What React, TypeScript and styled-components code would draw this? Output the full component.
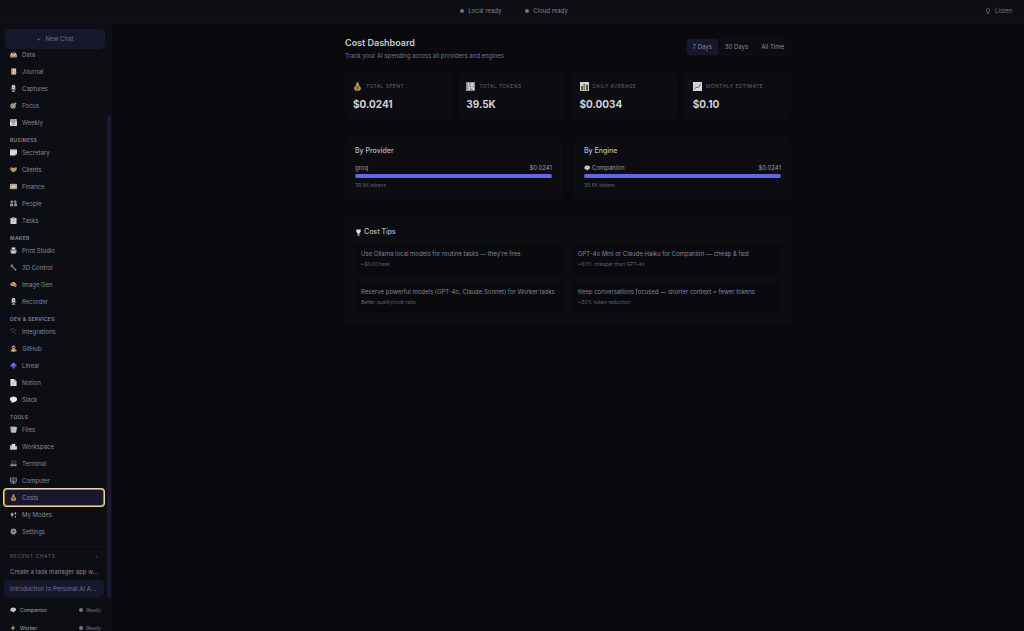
import React from 'react';
import styled, { createGlobalStyle } from 'styled-components';

const GlobalStyle = createGlobalStyle`
  *, *::before, *::after { box-sizing: border-box; }
  body {
    margin: 0;
    background: #09090e;
    color: #9597a5;
    font-family: Inter, "Liberation Sans", sans-serif;
    font-size: 6px;
    line-height: 8px;
  }
  h1, h2, p, ul { margin: 0; padding: 0; }
  ul { list-style: none; }
  button { font: inherit; border: 0; cursor: pointer; }
  a { color: inherit; text-decoration: none; }
`;

/* ---------- icons ---------- */

const glyphs: Record<string, React.ReactNode> = {
  data: (<><path d="M1 8 3 4h10l2 4v6H1z" fill="#d8d0c4" /><path d="M1 9h4l1 2h4l1-2h4v5H1z" fill="#b98a55" /><path d="M4 5h8v3H4z" fill="#70737c" /></>),
  journal: (<><rect x="3" y="1" width="11" height="14" rx="1" fill="#d9d3c8" /><path d="M3 1h3v14H3z" fill="#ad7a45" /><path d="M8 5h4M8 8h4" stroke="#8a7a66" /><path d="m8 14 6-6 1 2-5 5z" fill="#c48a48" /></>),
  mic: (<><rect x="4" y="0" width="8" height="10" rx="3" fill="#d3d4d8" /><path d="M6 3h5M6 6h5" stroke="#5a5c64" /><path d="M3 8c0 6 10 6 10 0M8 12v3M4 15h8" stroke="#989aa2" fill="none" strokeWidth="2" /></>),
  focus: (<><circle cx="7" cy="9" r="6" fill="#c9b9a5" /><circle cx="7" cy="9" r="4" fill="#6d4a3a" /><circle cx="7" cy="9" r="2" fill="#e0d2c0" /><path d="m8 8 6-6M12 1v3h3" stroke="#c8c8cc" fill="none" strokeWidth="1.5" /></>),
  calendar: (<><rect x="0" y="1" width="16" height="15" rx="1" fill="#d9d7d4" /><path d="M0 1h16v5H0z" fill="#9a8f8c" /><path d="M4 0v4M12 0v4" stroke="#e4e4e6" strokeWidth="1.5" /><path d="M4 8h2M7 8h2M10 8h2M4 12h2M7 12h2M10 12h2" stroke="#60626a" strokeWidth="2" /></>),
  note: (<><path d="M0 1h16v10l-4 4H0z" fill="#dcdad8" /><path d="M0 1h16v2H0z" fill="#8f9098" /><path d="M16 11h-4v4z" fill="#777983" /></>),
  handshake: (<><path d="m0 4 4-1 4 2 4-2 4 1-1 5-6 5-4-1-4-4z" fill="#b98c58" /><path d="m5 7 3-2 4 4M5 10l3 3" stroke="#e0b987" fill="none" strokeWidth="1.5" /></>),
  finance: (<><rect x="0" y="2" width="16" height="12" fill="#b1b2b1" /><rect x="5" y="2" width="5" height="12" fill="#c79a5b" /><circle cx="8" cy="8" r="3" fill="#e2d2b5" /><path d="M1 5h3M12 12h3" stroke="#53565c" /></>),
  people: (<g fill="#8d929e"><circle cx="4" cy="4" r="3" /><circle cx="12" cy="4" r="3" /><path d="M0 14V9q4-3 7 0v5zM9 14V9q4-3 7 0v5z" /></g>),
  tasks: (<><rect x="1" y="2" width="14" height="14" rx="1" fill="#d3d1cf" /><rect x="5" y="0" width="6" height="4" rx="1" fill="#8c8e98" /><path d="M5 7h6M5 10h6" stroke="#8b8c92" /></>),
  printer: (<><path d="M4 1h8v5H4z" fill="#e0e0e2" /><path d="M1 6h14v7H1z" fill="#9698a0" /><path d="M3 10h10v5H3z" fill="#d3d3d6" /></>),
  wrench: (<path d="M1 1q4-1 6 2 1 2 0 3l8 7-2 3-8-9q-3 1-5-2l3 0 1-2z" fill="#8b8e99" />),
  palette: (<><path d="M1 6q3-5 9-3 6 3 5 9-3 3-5 1-2-3-5-1-6-1-4-6z" fill="#c39557" /><circle cx="5" cy="6" r="1.3" fill="#5c4bd0" /><circle cx="9" cy="5" r="1.3" fill="#f0dfc2" /><circle cx="12" cy="9" r="1.3" fill="#a34436" /></>),
  plug: (<path d="m1 3 3-2M2 5l5-4 4 5-4 4zM9 9l5 5M12 3l2 3" stroke="#4d505b" strokeWidth="1.6" fill="none" />),
  github: (<><path d="M1 15q0-6 5-7h5q5 2 4 7z" fill="#bb8550" /><circle cx="8" cy="5" r="4" fill="#c8c6c3" /><path d="M5 4h6v3H5z" fill="#3d3b3c" /><path d="M6 11h4v4H6z" fill="#d9d6d1" /></>),
  linear: (<><path d="m8 0 8 8-8 8-8-8z" fill="#4c4fca" /><path d="m8 2 5 5-5 2-5-2z" fill="#7375ec" /></>),
  page: (<><path d="M1 0h9l5 5v11H1z" fill="#dedddb" /><path d="M10 0v5h5z" fill="#83858d" /><path d="M5 8h6M5 11h6" stroke="#a8a8aa" /></>),
  bubble: (<path d="M8 1c11 0 11 13 0 13l-5 2 1-3C-3 10-1 1 8 1z" fill="#e5e4e2" />),
  files: (<><path d="M0 1h11l4 2-2 12H2z" fill="#8c8e94" /><path d="M4 3h12l-2 12H3z" fill="#c9c8c6" /><path d="M6 7h6M6 10h5" stroke="#84858c" /></>),
  workspace: (<><path d="M0 5h6l2 2h8v8H0z" fill="#c8a677" /><path d="M4 2h8v9H4z" fill="#d9d8d5" /><path d="M1 9h14v6H1z" fill="#d5cbbb" /></>),
  terminal: (<><path d="M3 2h11v7H3z" fill="#24272d" stroke="#565b63" /><path d="M1 10h14v4H1z" fill="#a5a7ab" /><path d="M3 12h10" stroke="#575a62" /></>),
  computer: (<><rect x="1" y="2" width="14" height="9" fill="#30343c" stroke="#8c9099" strokeWidth="1.5" /><path d="M4 5h7M4 8h5" stroke="#747985" /><path d="M7 11h2v3H7zM2 14h12" stroke="#a4a6ab" strokeWidth="1.5" /></>),
  bag: (<><path d="M5 1h6L9 5q6 3 5 8-1 3-6 3t-6-3q-1-5 5-8z" fill="#b88b4e" /><path d="M5 5h6" stroke="#e5c48c" strokeWidth="1.5" /><path d="M10 8q-4-1-4 1 4 0 4 2-1 2-4 1M8 7v7" stroke="#5c3f22" fill="none" /></>),
  sparkle: (<g fill="#cdb98f"><path d="m5 2 1 4 3 2-3 2-1 5-2-5-2-2 2-2z" /><path d="m12 1 1 3 2 1-2 1-1 3-1-3-2-1 2-1zM12 10l2 3-2 3-1-3z" /></g>),
  gear: (<><circle cx="8" cy="8" r="5.5" fill="#8e9199" stroke="#a5a7ad" strokeWidth="3" strokeDasharray="3 1.3" /><circle cx="8" cy="8" r="2.4" fill="#383b43" /></>),
  numbers: (<><rect x="0" y="0" width="16" height="16" rx="1" fill="#8d9299" /><path d="M3 3h2v4M9 3h4v2H9v2h4M3 9h3v4H3M10 9v2h3M13 9v5" stroke="#eef0f2" fill="none" strokeWidth="1.6" /></>),
  bars: (<><rect x="0" y="0" width="16" height="16" fill="#d5d4d1" /><path d="M2 7h3v8H2z" fill="#4c4f55" /><path d="M6 3h3v12H6z" fill="#94723f" /><path d="M11 5h3v10h-3z" fill="#353943" /></>),
  trend: (<><rect x="0" y="0" width="16" height="16" fill="#d9d9da" /><path d="m2 13 4-4 3 1 5-7" stroke="#54565e" fill="none" strokeWidth="1.6" /><path d="M2 4h5M2 7h3" stroke="#a9aaae" /></>),
  bulb: (<><path d="M3 1h10v5l-3 4v2H6v-2L3 6z" fill="#e2e2e2" /><path d="M6 12h4v4H6z" fill="#a6a8ac" /></>),
  brain: (<><path d="M1 6q1-5 7-5 8 0 8 6 0 4-5 5l-1 3-3-3q-7 1-6-6z" fill="#d8cfca" /><path d="M4 6q3-2 4 1 3-3 5 0" stroke="#8e7e7a" fill="none" /></>),
  bolt: (<path d="M10 0 2 9h5l-2 7 9-10H8z" fill="#c8a574" />),
  listen: (<path d="M8 1q4 0 4 4v3q0 3-4 3T4 8V5q0-4 4-4zM8 11v4M5 15h6" stroke="#7c8090" fill="none" strokeWidth="1.5" />),
};

const Svg = styled.svg<{ $size: number }>`
  flex: none;
  display: block;
  width: ${(p) => p.$size}px;
  height: ${(p) => p.$size}px;
`;

const Glyph = ({ name, size = 7 }: { name: string; size?: number }) => (
  <Svg $size={size} viewBox="0 0 16 16" aria-hidden="true">{glyphs[name]}</Svg>
);

/* ---------- shell ---------- */

const Shell = styled.div`
  height: 100vh;
  display: flex;
  flex-direction: column;
  overflow: hidden;
`;

const TopBar = styled.header`
  flex: none;
  display: grid;
  grid-template-columns: 1fr auto 1fr;
  align-items: center;
  height: 24px;
  padding: 0 12px 1px;
  background: #0e0f14;
  border-bottom: 1px solid #111118;
  color: #81848f;
`;

const Statuses = styled.div`
  grid-column: 2;
  display: flex;
  gap: 24px;
  padding-left: 4px;
`;

const Status = styled.span<{ $gap?: number }>`
  display: flex;
  align-items: center;
  gap: ${(p) => p.$gap ?? 4}px;
`;

const Dot = styled.i`
  width: 4px;
  height: 4px;
  border-radius: 50%;
  background: #74777f;
`;

const ListenButton = styled.button`
  justify-self: end;
  display: flex;
  align-items: center;
  gap: 4px;
  padding: 0;
  background: none;
  color: #737683;
`;

const Body = styled.div`
  flex: 1;
  min-height: 0;
  display: flex;
`;

/* ---------- sidebar ---------- */

const Sidebar = styled.aside`
  flex: none;
  width: 112px;
  overflow: hidden;
  background: #0d0e13;
  border-right: 1px solid #101017;
`;

const NewChat = styled.button`
  display: flex;
  align-items: center;
  justify-content: center;
  gap: 5px;
  width: 100px;
  height: 20px;
  margin: 5px 5px 2px;
  border-radius: 5px;
  background: #17172d;
  color: #707193;
`;

const ScrollArea = styled.div`
  display: flex;
  justify-content: space-between;
  overflow: hidden;
  border-bottom: 1px solid #12131a;
`;

const ScrollTrack = styled.div`
  width: 4px;
  padding-top: 65px;
  display: flex;
`;

const ScrollThumb = styled.div`
  flex: 1;
  border-radius: 2px;
  background: #1b1934;
`;

const Nav = styled.nav`
  width: 100px;
  margin: -5px 0 0 4px;
`;

const GroupLabel = styled.h2`
  padding: 5px 6px 0;
  font-size: 5px;
  line-height: 8px;
  font-weight: 600;
  letter-spacing: 0.06em;
  color: #858895;
`;

const NavLink = styled.a<{ $active?: boolean }>`
  display: flex;
  align-items: center;
  gap: 5px;
  height: 17px;
  padding: 0 ${(p) => (p.$active ? 5 : 6)}px;
  border-radius: 3px;
  color: #858996;
  ${(p) => p.$active && `
    background: #17172d;
    border: 1px solid #b87a28;
    box-shadow: 0 0 0 1px #ecd6a8;
  `}
`;

const Recent = styled.section`
  margin-top: 6px;
  padding: 5px 0 1px;
  border-top: 1px solid #13141b;
`;

const RecentHead = styled.div`
  display: flex;
  justify-content: space-between;
  padding: 0 6px 3px;
  font-size: 5px;
  color: #55576a;

  h2 {
    font-size: 5px;
    font-weight: 500;
    letter-spacing: 0.12em;
  }
  button {
    padding: 0;
    background: none;
    color: inherit;
  }
`;

const ChatLink = styled.a<{ $active?: boolean }>`
  display: block;
  padding: 0 6px;
  line-height: 17px;
  border-radius: 4px;
  white-space: nowrap;
  color: ${(p) => (p.$active ? '#6e7199' : '#858895')};
  background: ${(p) => (p.$active ? '#17172d' : 'none')};
`;

const EngineRow = styled.div`
  display: flex;
  align-items: center;
  justify-content: space-between;
  height: 18px;
  padding: 0 10px;
  font-size: 5px;
  color: #a0a2ad;
`;

const EngineList = styled.div`
  padding-top: 2px;
`;

const Ready = styled(Status)`
  color: #6c7080;
`;

/* ---------- dashboard ---------- */

const Main = styled.main`
  flex: 1;
  min-width: 0;
  padding: 12px 16px;
  overflow: auto;
`;

const Content = styled.div`
  max-width: 446px;
  margin: 0 auto;
`;

const PageHead = styled.header`
  display: flex;
  justify-content: space-between;
  align-items: flex-start;
  padding-bottom: 10px;
`;

const Title = styled.h1`
  font-size: 9px;
  line-height: 14px;
  font-weight: 600;
  color: #c9cad1;
`;

const Subtitle = styled.p`
  line-height: 11px;
  color: #777a88;
`;

const Tabs = styled.div`
  display: flex;
  gap: 1px;
  margin-top: 2px;
  padding: 1px;
  border-radius: 4px;
  background: #0c0d12;
`;

const Tab = styled.button<{ $active?: boolean }>`
  padding: 4px 6px;
  border-radius: 3px;
  line-height: 8px;
  background: ${(p) => (p.$active ? '#17172d' : 'transparent')};
  color: ${(p) => (p.$active ? '#8385aa' : '#8b8e9a')};
`;

const Cards = styled.div`
  display: grid;
  grid-template-columns: repeat(4, 1fr);
  gap: 7px;
`;

const Surface = styled.section`
  background: #0c0c11;
  border: 1px solid #0d0d13;
  border-radius: 5px;
`;

const StatCard = styled(Surface)`
  padding: 8px 8px 7px 7px;
`;

const StatLabel = styled.h2`
  display: flex;
  align-items: center;
  gap: 4px;
  font-size: 5px;
  line-height: 12px;
  font-weight: 400;
  letter-spacing: 0.08em;
  color: #606371;
`;

const StatValue = styled.p`
  padding-top: 4px;
  font-size: 10px;
  line-height: 16px;
  font-weight: 700;
  color: #d3d3d8;
`;

const Panels = styled.div`
  display: grid;
  grid-template-columns: 1fr 1fr;
  gap: 12px;
  margin: 16px 0;
`;

const Panel = styled(Surface)`
  padding: 9px 9px 10px;
`;

const PanelTitle = styled.h2`
  display: flex;
  align-items: center;
  gap: 2px;
  padding-bottom: 7px;
  font-size: 7px;
  line-height: 10px;
  font-weight: 500;
  color: #bcbdc7;
`;

const UsageRow = styled.div`
  display: flex;
  justify-content: space-between;
  line-height: 10px;
  color: #9b9da9;
`;

const Bar = styled.div`
  height: 4px;
  margin: 1px 0 2px;
  border-radius: 2px;
  overflow: hidden;
  background: #15161e;
`;

const Fill = styled.div`
  height: 100%;
  background: #6366ea;
`;

const Small = styled.p`
  font-size: 5px;
  line-height: 10px;
  color: #5f6270;
`;

const Tips = styled.ul`
  display: grid;
  grid-template-columns: 1fr 1fr;
  gap: 8px;
`;

const Tip = styled.li`
  padding: 5px 6px;
  border-radius: 4px;
  background: #09090e;
  line-height: 10px;
  white-space: nowrap;
  color: #858896;
`;

const groups: { label?: string; items: [string, string][] }[] = [
  { items: [['data', 'Data'], ['journal', 'Journal'], ['mic', 'Captures'], ['focus', 'Focus'], ['calendar', 'Weekly']] },
  { label: 'BUSINESS', items: [['note', 'Secretary'], ['handshake', 'Clients'], ['finance', 'Finance'], ['people', 'People'], ['tasks', 'Tasks']] },
  { label: 'MAKER', items: [['printer', 'Print Studio'], ['wrench', '3D Control'], ['palette', 'Image Gen'], ['mic', 'Recorder']] },
  { label: 'DEV & SERVICES', items: [['plug', 'Integrations'], ['github', 'GitHub'], ['linear', 'Linear'], ['page', 'Notion'], ['bubble', 'Slack']] },
  { label: 'TOOLS', items: [['files', 'Files'], ['workspace', 'Workspace'], ['terminal', 'Terminal'], ['computer', 'Computer'], ['bag', 'Costs'], ['sparkle', 'My Modes'], ['gear', 'Settings']] },
];

const stats = [
  ['bag', 'TOTAL SPENT', '$0.0241'],
  ['numbers', 'TOTAL TOKENS', '39.5K'],
  ['bars', 'DAILY AVERAGE', '$0.0034'],
  ['trend', 'MONTHLY ESTIMATE', '$0.10'],
];

const usage = [
  { title: 'By Provider', name: 'groq', cost: '$0.0241', tokens: '39.5K tokens', share: 100 },
  { title: 'By Engine', icon: 'brain', name: 'Companion', cost: '$0.0241', tokens: '39.5K tokens', share: 100 },
];

const tips = [
  ["Use Ollama local models for routine tasks — they're free", '~$0.00/task'],
  ['GPT-4o Mini or Claude Haiku for Companion — cheap & fast', '~90% cheaper than GPT-4o'],
  ['Reserve powerful models (GPT-4o, Claude Sonnet) for Worker tasks', 'Better quality/cost ratio'],
  ['Keep conversations focused — shorter context = fewer tokens', '~30% token reduction'],
];

export default function App() {
  return (
    <Shell>
      <GlobalStyle />
      <TopBar>
        <Statuses>
          <Status><Dot />Local ready</Status>
          <Status><Dot />Cloud ready</Status>
        </Statuses>
        <ListenButton><Glyph name="listen" size={6} />Listen</ListenButton>
      </TopBar>
      <Body>
        <Sidebar>
          <NewChat><span>+</span>New Chat</NewChat>
          <ScrollArea>
            <Nav>
              {groups.map((group, i) => (
                <div key={i}>
                  {group.label && <GroupLabel>{group.label}</GroupLabel>}
                  {group.items.map(([icon, label]) => (
                    <NavLink key={label} href="#" $active={label === 'Costs'}>
                      <Glyph name={icon} />{label}
                    </NavLink>
                  ))}
                </div>
              ))}
              <Recent>
                <RecentHead><h2>RECENT CHATS</h2><button aria-label="Add chat">+</button></RecentHead>
                <ChatLink href="#">Create a task manager app w…</ChatLink>
                <ChatLink href="#" $active>Introduction to Personal AI A…</ChatLink>
              </Recent>
            </Nav>
            <ScrollTrack><ScrollThumb /></ScrollTrack>
          </ScrollArea>
          <EngineList>
            <EngineRow><Status><Glyph name="brain" size={6} />Companion</Status><Ready $gap={3}><Dot />Ready</Ready></EngineRow>
            <EngineRow><Status><Glyph name="bolt" size={6} />Worker</Status><Ready $gap={3}><Dot />Ready</Ready></EngineRow>
          </EngineList>
        </Sidebar>
        <Main>
          <Content>
            <PageHead>
              <div>
                <Title>Cost Dashboard</Title>
                <Subtitle>Track your AI spending across all providers and engines</Subtitle>
              </div>
              <Tabs>
                <Tab $active>7 Days</Tab>
                <Tab>30 Days</Tab>
                <Tab>All Time</Tab>
              </Tabs>
            </PageHead>
            <Cards>
              {stats.map(([icon, label, value]) => (
                <StatCard key={label}>
                  <StatLabel><Glyph name={icon} size={9} />{label}</StatLabel>
                  <StatValue>{value}</StatValue>
                </StatCard>
              ))}
            </Cards>
            <Panels>
              {usage.map((u) => (
                <Panel key={u.title}>
                  <PanelTitle>{u.title}</PanelTitle>
                  <UsageRow>
                    <Status $gap={2}>{u.icon && <Glyph name={u.icon} size={6} />}{u.name}</Status>
                    <span>{u.cost}</span>
                  </UsageRow>
                  <Bar><Fill style={{ width: `${u.share}%` }} /></Bar>
                  <Small>{u.tokens}</Small>
                </Panel>
              ))}
            </Panels>
            <Panel>
              <PanelTitle><Glyph name="bulb" />Cost Tips</PanelTitle>
              <Tips>
                {tips.map(([text, note]) => (
                  <Tip key={text}>{text}<Small>{note}</Small></Tip>
                ))}
              </Tips>
            </Panel>
          </Content>
        </Main>
      </Body>
    </Shell>
  );
}
